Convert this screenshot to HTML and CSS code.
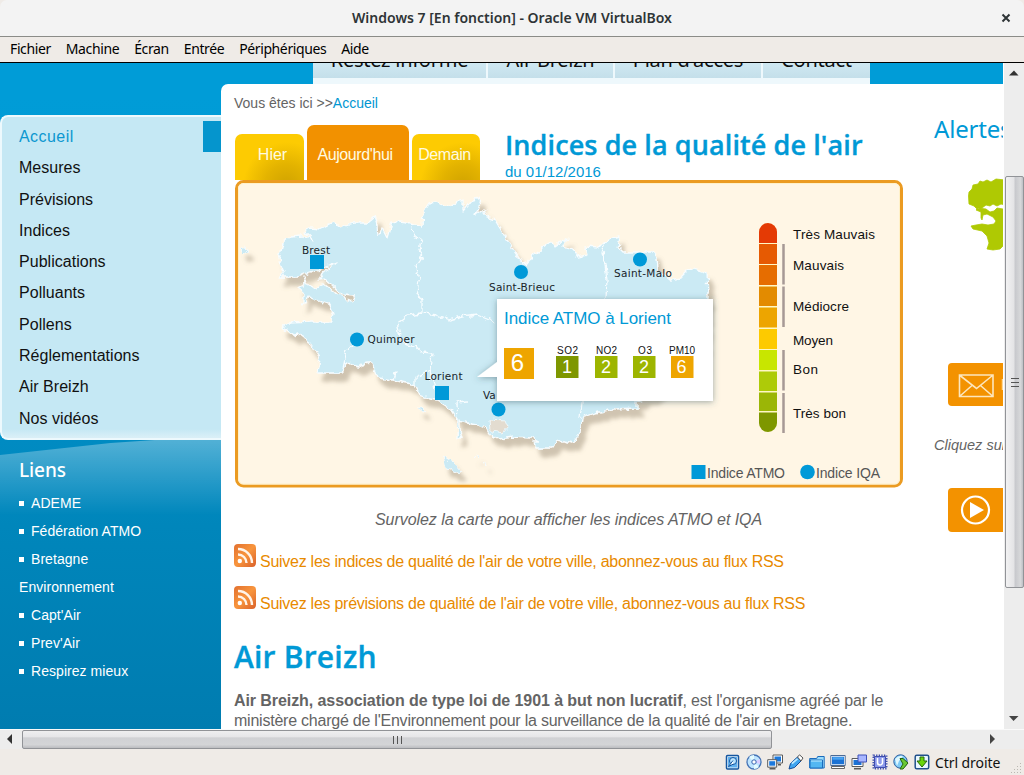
FILE: index.html
```html
<!DOCTYPE html>
<html lang="fr">
<head>
<meta charset="utf-8">
<title>Windows 7 [En fonction] - Oracle VM VirtualBox</title>
<link rel="stylesheet" href="styles.css">
</head>
<body>
<header class="titlebar">
  <span class="title-text">Windows 7 [En fonction] - Oracle VM VirtualBox</span>
  <svg class="close" width="10" height="10" viewBox="0 0 10 10"><path d="M1.500 1.500l7 7M8.500 1.500l-7 7" stroke="#2e3436" stroke-width="2"/></svg>
</header>
<nav class="menubar"><span>Fichier</span><span>Machine</span><span>Écran</span><span>Entrée</span><span>Périphériques</span><span>Aide</span></nav>

<div class="screen">
  <div class="page">
    <aside class="sidebar">
      <ul class="menu">
        <li class="current">Accueil</li><li>Mesures</li><li>Prévisions</li><li>Indices</li><li>Publications</li><li>Polluants</li><li>Pollens</li><li>Réglementations</li><li>Air Breizh</li><li>Nos vidéos</li>
      </ul>
      <section class="links">
        <h3>Liens</h3>
        <ul><li>ADEME</li><li>Fédération ATMO</li><li>Bretagne</li><li class="cont">Environnement</li><li>Capt'Air</li><li>Prev'Air</li><li>Respirez mieux</li></ul>
      </section>
    </aside>
    <div class="body">
      <div class="topnav"><div class="tabs"><span class="t1">Restez informé</span><span class="t2">Air Breizh</span><span class="t3">Plan d'accès</span><span class="t4">Contact</span></div></div>
      <div class="white">
        <main class="main">
          <p class="crumb">Vous êtes ici &gt;&gt;<a>Accueil</a></p>
          <div class="maphead">
            <div class="day hier"><span>Hier</span></div><div class="day today"><span>Aujourd'hui</span></div><div class="day demain"><span>Demain</span></div>
            <div class="heads"><h1>Indices de la qualité de l'air</h1><p>du 01/12/2016</p></div>
          </div>
          <div class="map">
            <svg width="668" height="308" viewBox="235 180 668 308">
              <defs>
                <filter id="coast" x="235" y="180" width="520" height="308" filterUnits="userSpaceOnUse">
                  <feTurbulence type="fractalNoise" baseFrequency="0.16" numOctaves="2" seed="4"/>
                  <feDisplacementMap in="SourceGraphic" scale="7" xChannelSelector="R" yChannelSelector="G" result="land"/>
                  <feDropShadow in="land" dx="5" dy="8" stdDeviation="2.2" flood-color="#8d8069" flood-opacity=".42"/>
                </filter>
                <filter id="lift" x="-20%" y="-20%" width="140%" height="150%"><feDropShadow dx="0" dy="1" stdDeviation="3" flood-color="#34545f" flood-opacity=".5"/></filter>
                <clipPath id="pill"><rect x="759" y="223" width="18" height="209" rx="9"/></clipPath>
              </defs>
              <rect x="236.500" y="181.500" width="665" height="304.500" rx="7" fill="#fff6e5" stroke="#eb9b22" stroke-width="3"/>
              <rect x="238.500" y="183.500" width="661" height="300.500" rx="5" fill="none" stroke="#fff1c9"/>
              <g filter="url(#coast)" stroke="#f8fdff" stroke-width="1.300" stroke-linejoin="round" fill="#cbeaf4">
                <path d="M279 260L283 243 290 237 302 236 313 240 304 232 310 228 320 229 333 222 340 227 353 223 367 223 375 216 378 225 379 237 382 228 387 238 392 221 407 223 422 227 423 213 430 203 436 202 447 207 463 200 463 211 472 200 480 198 475 216 484 209 487 217 495 220 507 240 519 258 522 263 528 262 533 255 550 242 553 247 567 238 563 247 573 250 578 257 587 255 585 247 598 248 605 241 620 237 618 247 623 252 652 252 657 258 658 270 670 280 680 278 690 268 707 273 708 297 706 330 704 370 672 385 655 395 637 401 637 408 613 409 595 413 582 418 580 433 573 443 558 440 553 448 535 448 533 442 540 442 532 438 513 437 500 439 492 437 487 429 478 425 467 423 460 420 460 430 462 438 457 438 458 420 452 410 437 400 430 399 420 395 415 385 393 380 378 378 372 365 366 360 363 367 347 363 342 373 318 373 320 358 310 343 298 334 293 335 287 330 282 327 288 323 313 322 330 322 333 313 330 305 308 297 303 305 303 292 298 288 305 283 303 277 309 286 317 288 325 285 338 295 352 301 355 296 343 295 331 284 325 279 318 280 323 272 337 263 320 269 307 273 297 277 280 277 283 270Z"/>
                <path fill="none" d="M412 227L414 236 421 240 419 250 422 258 416 267 419 280 417 293 422 300 422 313 407 315 397 323 402 343 416 346 421 352 432 353 430 370 415 377 415 385M422 313L437 315 450 320 462 317 477 315 487 319 495 323M605 241L602 253 605 265 607 280 606 298M582 390L582 402 580 418M393 380L395 372M430 370L434 390M342 373L347 350 354 344M468 401L457 402 458 420"/>
                <path stroke-width=".8" d="M240 250l5-3 4 4-5 3zM443 456l10 6 8 9-2 3-13-7zM417 408l6 0 3 3-4 1zM475 456l3 1v2zM484 463l3 2v2z"/>
                <path fill="#e3dcd0" stroke-width=".8" d="M490 419l15 1 3 7-5 6-12-2z"/>
              </g>
              <g fill="#0099d8"><path d="M310 255h14v14h-14zM435 386h14v14h-14zM691.500 465h14v14h-14z"/><circle cx="521" cy="272" r="7"/><circle cx="640" cy="259.500" r="7"/><circle cx="357" cy="339.500" r="7"/><circle cx="498.500" cy="409.500" r="7"/><circle cx="807.500" cy="472" r="7.300"/></g>
              <g class="city"><text x="302" y="254" textLength="28">Brest</text><text x="489" y="291" textLength="66">Saint-Brieuc</text><text x="614" y="277" textLength="58">Saint-Malo</text><text x="367.500" y="342.500" textLength="47">Quimper</text><text x="424.500" y="379.500" textLength="38">Lorient</text><text x="483" y="399">Va</text></g>
              <g filter="url(#lift)"><path d="M497 299h216v102H497V377H477L497 362z" fill="#fff"/></g>
              <text class="poptitle" x="504" y="324" textLength="167">Indice ATMO à Lorient</text>
              <path d="M504 348h30v31h-30zM671 356h22.500v22h-22.500z" fill="#eea500"/><path d="M556 356h22.500v22h-22.500z" fill="#7e9700"/><path d="M595 356h22.500v22h-22.500zM633 356h22.500v22h-22.500z" fill="#9db500"/>
              <g class="small"><text x="557" y="354" textLength="21">SO2</text><text x="596" y="354" textLength="21">NO2</text><text x="638" y="354" textLength="14">O3</text><text x="669" y="354" textLength="26">PM10</text></g>
              <g class="score"><text class="big" x="517.500" y="371">6</text><text x="567" y="373">1</text><text x="606" y="373">2</text><text x="644" y="373">2</text><text x="681.500" y="373">6</text></g>
              <g clip-path="url(#pill)"><path fill="#fff7c4" d="M759 223h18v210h-18z"/><path fill="#e43a05" d="M759 223h18v20h-18z"/><path fill="#e65a02" d="M759 244h18v20h-18z"/><path fill="#e66d00" d="M759 265h18v20h-18z"/><path fill="#e38b00" d="M759 286.500h18v19.500h-18z"/><path fill="#eda500" d="M759 307.500h18v20h-18z"/><path fill="#fdca00" d="M759 329h18v20h-18z"/><path fill="#c8e600" d="M759 350h18v20h-18z"/><path fill="#aecb08" d="M759 371.500h18v19.500h-18z"/><path fill="#9bb606" d="M759 392.500h18v18.500h-18z"/><path fill="#7e9700" d="M759 412.500h18v20h-18z"/></g>
              <path stroke="#a79995" stroke-width="2.500" d="M783.500 244v40.500M783.500 286.500v40.500M783.500 350v40.500M783.500 393v40"/>
              <g class="level"><text x="793" y="239" textLength="82">Très Mauvais</text><text x="793" y="270" textLength="51">Mauvais</text><text x="793" y="311" textLength="56">Médiocre</text><text x="793" y="345" textLength="40">Moyen</text><text x="793" y="374" textLength="25">Bon</text><text x="793" y="418" textLength="53">Très bon</text></g>
              <g class="legend"><text x="707" y="478" textLength="78">Indice ATMO</text><text x="816" y="478" textLength="64">Indice IQA</text></g>
            </svg>
          </div>
          <p class="hint">Survolez la carte pour afficher les indices ATMO et IQA</p>
          <p class="rss"><svg width="22" height="23" viewBox="0 0 22 23"><use href="#feed"/></svg><a>Suivez les indices de qualité de l'air de votre ville, abonnez-vous au flux RSS</a></p>
          <p class="rss"><svg width="22" height="23" viewBox="0 0 22 23"><use href="#feed"/></svg><a>Suivez les prévisions de qualité de l'air de votre ville, abonnez-vous au flux RSS</a></p>
          <h2>Air Breizh</h2>
          <p class="intro"><span class="l1"><b>Air Breizh, association de type loi de 1901 à but non lucratif</b>, est l'organisme agréé par le</span><br><span class="l2">ministère chargé de l'Environnement pour la surveillance de la qualité de l'air en Bretagne.</span></p>
        </main>
        <aside class="right">
          <h3>Alertes</h3>
          <svg class="tree" width="40" height="74" viewBox="963 178 40 74"><path fill="#afc903" stroke="#afc903" stroke-width=".8" stroke-linejoin="round" d="M969 204l-.5-8 .5-4 3-3 1-4 5-1 2-3 3 1 4-2 4 2 5-3 9 1v25l-4-1-4 2-4-2-3 2-4-1-4 3-5 1-3-3zM1003 209l-6-1-3 3-4 1-4-3-8-1-2 2 5 2 0 6 1 2 1-5 4-1 6 3 3 4-2 3-6 1-6-1-6 1-5 1 2 3 9 2 5 5 2 7-2 6 6 1 7-1 3-3z"/></svg>
          <div class="btn"><svg width="55" height="43" viewBox="948 363 55 43"><g fill="none" stroke="#fde6bd" stroke-width="1.600"><path d="M959.500 375h33.500v21.500h-33.500zM960 375.500l16.500 13 16-13M960 396l12-10.500M992.500 396l-12-10.500"/></g><path stroke="#ffd795" stroke-width="1.500" d="M1002.500 379v11"/></svg></div>
          <p class="click">Cliquez sur</p>
          <div class="btn"><svg width="55" height="44" viewBox="948 488 55 44"><circle cx="975.500" cy="510" r="13.500" fill="none" stroke="#fff" stroke-width="2.200"/><path fill="#fff" d="M970 502l14 8-14 8z"/></svg></div>
        </aside>
      </div>
    </div>
  </div>
  <div class="vbar"><svg width="18" height="20" viewBox="0 0 18 20"><path fill="#333" d="M4 12.500l5-5 4.500 5z"/></svg><div class="vthumb"><i></i><i></i><i></i></div><svg class="end" width="18" height="20" viewBox="0 0 18 20"><path fill="#444" d="M4 7h9.500l-5 5z"/></svg></div>
</div>
<div class="hbar"><svg width="22" height="20" viewBox="0 0 22 20"><path fill="#333" d="M12 4v10L7 9z"/></svg><div class="hthumb"><i></i><i></i><i></i></div><svg class="hend" width="20" height="20" viewBox="0 0 20 20"><path fill="#444" d="M6 4v10l5-5z"/></svg></div>
<footer class="status">
  <svg width="16" height="16" viewBox="0 0 16 16"><rect x="1.500" y="1.500" width="12" height="13.500" rx="1" fill="#e9f7ff" stroke="#15569f" stroke-width="1.500"/><rect x="3" y="3" width="9" height="10.500" fill="#62b1ef"/><circle cx="8" cy="7" r="3.500" fill="#b9e4ff" stroke="#15569f"/><path d="M8 6.500l-4.500 6 5-2.500" fill="#fff" stroke="#15569f"/></svg>
  <svg width="16" height="16" viewBox="0 0 16 16"><circle cx="8" cy="8" r="7" fill="#bfe5ff" stroke="#4674b6" stroke-width="1.300"/><path d="M8 8L3 3a7 7 0 0 1 5-2zM8 8l5 5a7 7 0 0 1-5 2z" fill="#e4fbff"/><path d="M8 8l6-3v5z" fill="#d9ccff"/><circle cx="8" cy="8" r="2.200" fill="#fff" stroke="#3463b1"/></svg>
  <svg width="16" height="16" viewBox="0 0 16 16"><path d="M6 1h9.500v8H6z" fill="#fff" stroke="#5a5a5a"/><path d="M7.500 2.500H14v5H7.500z" fill="#1b78dd"/><path d="M.7 5.700h9v7.500h-9z" fill="#fff" stroke="#5a5a5a"/><path d="M2.200 7.200h6v4.500h-6z" fill="#1b78dd"/><path d="M2.500 14.700h6M11 10.700h3" stroke="#5a5a5a" stroke-width="1.600"/></svg>
  <svg width="16" height="16" viewBox="0 0 16 16"><path d="M1 15l1.500-5.500 7-6.500 3.500 4-6.500 6.500z" fill="#40a5ef" stroke="#164c96"/><path d="M9.500 3l2-2.200L15 4l-2 3z" fill="#fff" stroke="#555"/><path d="M4 9.500l5.500-4.700" stroke="#c3ecff" stroke-width="1.700"/></svg>
  <svg width="16" height="16" viewBox="0 0 16 16"><path d="M.7 14V4.500h7l1-2h6.500V14z" fill="#9cdcfb" stroke="#1b6cbd"/><path d="M1 6h12.500v8H1z" fill="#53b7f2" stroke="#1b6cbd"/><path d="M2 7h11" stroke="#c3eeff"/></svg>
  <svg width="16" height="16" viewBox="0 0 16 16"><path d="M.8 1.500h14.400v10H.8z" fill="#fff" stroke="#4b6a94"/><path d="M2 2.700h12v7.600H2z" fill="#1b72d4"/><path d="M2.500 3.200h11v2.500h-11z" fill="#4aa3f0"/><path d="M1.500 12.500h13v2h-13z" fill="#fff" stroke="#666"/></svg>
  <svg width="16" height="16" viewBox="0 0 16 16"><path d="M1 4.500h11v8H1z" fill="#fff" stroke="#5a5a5a"/><path d="M2.500 6h8v5h-8z" fill="#1b72d4"/><path d="M3 14.700h7" stroke="#5a5a5a" stroke-width="1.600"/><path d="M7 1h8.500v7H7z" fill="#a9b7ff" stroke="#4052b9"/></svg>
  <svg width="16" height="16" viewBox="0 0 16 16"><rect x="1.500" y="1.500" width="13" height="13" fill="none" stroke="#3f4ead" stroke-width="2" stroke-dasharray="1.300 1.300"/><path d="M2.500 2.500h11v11h-11z" fill="#8c9aec" stroke="#3f4ead"/><path d="M5.500 4v4.500a2.500 2.500 0 0 0 5 0V4" fill="none" stroke="#fff" stroke-width="1.600"/></svg>
  <svg width="16" height="16" viewBox="0 0 16 16"><circle cx="7.500" cy="7.500" r="6.700" fill="#7fcaf5" stroke="#315f9e"/><path d="M2 5q4-4 8-3L6 7 4 12z" fill="#dff7ff"/><path d="M7 4.500h3l5 4.500-5 6H7l3-5z" fill="#6cc934" stroke="#24660e"/></svg>
  <svg width="16" height="16" viewBox="0 0 16 16"><rect x="1.200" y="1.200" width="13.500" height="13.500" rx="1.500" fill="#eaf8ff" stroke="#22518c" stroke-width="1.500"/><path d="M6 3h4v4h3l-5 6-5-6h3z" fill="#69d60b" stroke="#28680d"/></svg>
  <span>Ctrl droite</span>
  <svg class="grip" width="13" height="13" viewBox="0 0 13 13"><path fill="#bbb8b2" d="M10 1h1v1h-1zM7 4h1v1H7zM10 4h1v1h-1zM4 7h1v1H4zM7 7h1v1H7zM10 7h1v1h-1zM1 10h1v1H1zM4 10h1v1H4zM7 10h1v1H7zM10 10h1v1h-1z"/></svg>
</footer>
<svg class="defs" width="0" height="0"><defs>
  <linearGradient id="fg" x1="0" y1="0" x2="1" y2="1"><stop offset="0" stop-color="#e2702f"/><stop offset=".5" stop-color="#f8953d"/><stop offset="1" stop-color="#d9602a"/></linearGradient>
  <g id="feed"><rect width="22" height="23" rx="4" fill="url(#fg)"/><circle cx="5.800" cy="17" r="2.200" fill="#fff"/><path d="M4 10.500a8.500 8.500 0 0 1 8.500 8.500M4 5a14 14 0 0 1 14 14" fill="none" stroke="#fff4e8" stroke-width="2.400"/></g>
</defs></svg>
</body>
</html>
```

FILE: styles.css
```css
* { box-sizing: border-box; }
body { margin: 0; width: 1024px; height: 775px; overflow: hidden; display: flex; flex-direction: column; background: #efebe7; font-family: "Liberation Sans", Arial, sans-serif; }
h1, h2, h3, p, ul { margin: 0; padding: 0; }
ul { list-style: none; }
svg { display: block; flex: none; }
.defs { position: absolute; }

.titlebar { height: 37px; flex: none; background: #f3f3f3; border-bottom: 1px solid #8b8c88; border-radius: 7px 7px 0 0; display: grid; grid-template-columns: 1fr auto 1fr; align-items: center; font: 600 14px "Noto Sans", sans-serif; color: #2e3436; }
.title-text { grid-column: 2; white-space: nowrap; padding-bottom: 2px; }
.close { justify-self: end; margin-right: 13px; }
.menubar { height: 26px; flex: none; border-bottom: 1px solid #000; background: #efebe7; display: flex; align-items: center; gap: 15px; padding: 0 0 2px 10px; font: 14px/20px "Noto Sans", sans-serif; letter-spacing: -.39px; color: #000; }

.screen { height: 666px; flex: none; display: flex; background: #fff; }
.page { width: 1003px; height: 666px; overflow: hidden; display: flex; background: linear-gradient(#009cd7 0, #009cd7 35px, #0096d0 45%, #007cb0 100%); }
.sidebar { width: 221px; flex: none; padding-top: 52px; }
.menu { height: 325px; background: linear-gradient(#c5e8f4 0, #c5e8f4 312px, #d9eff7 320px); border: solid #edf9fd; border-width: 2px 0 2px 2px; border-radius: 8px 0 0 8px; padding: 4px 0 0 17px; font-size: 16px; letter-spacing: .03px; }
.menu li { height: 31.300px; line-height: 31.300px; color: #111; }
.menu .current { letter-spacing: .45px; color: #0b97d0; background: linear-gradient(#0595cd, #0595cd) right / 18px 32px no-repeat; }
.links { height: 289px; padding: 14px 0 0 19px; color: #fff; background: linear-gradient(#008bc2 0, #0086bb 30%, #007cb0 100%); position: relative; }
.links::before { content: ""; position: absolute; inset: 0; background: linear-gradient(rgba(255,255,255,.32), rgba(255,255,255,0) 75px); clip-path: polygon(0 15px, 50% 3px, 70% 0, 100% 0, 100% 100%, 0 100%); }
.links h3 { font: 500 19px/32px "Noto Sans", sans-serif; letter-spacing: -.1px; position: relative; }
.links ul { padding-top: 3px; font-size: 14px; letter-spacing: .05px; position: relative; }
.links li { height: 28px; line-height: 28px; display: flex; align-items: center; }
.links li::before { content: ""; width: 5px; height: 5px; background: #fff; margin-right: 7px; }
.links .cont::before { display: none; }

.body { width: 782px; flex: none; display: flex; flex-direction: column; }
.topnav { height: 21px; flex: none; padding-left: 92px; }
.tabs { width: 557px; height: 21px; background: #eef8fc; display: flex; gap: 2px; font: 20px/1px "Noto Sans", sans-serif; letter-spacing: -.25px; color: #111; }
.tabs span { height: 15px; overflow: hidden; background: linear-gradient(#cfe8f2, #c4dfea); text-align: center; white-space: nowrap; }
.tabs span::before { content: ""; display: block; margin-top: -4px; }
.t1 { width: 173px; } .t2 { width: 125px; } .t3 { width: 146px; } .t4 { width: 107px; }
.white { flex: 1; background: #fff; border-radius: 7px 0 0 0; display: flex; }
.main { width: 682px; flex: none; padding-left: 13px; }
.crumb { height: 41px; padding-top: 9px; line-height: 20px; font-size: 14px; color: #646464; }
.crumb a { color: #0096d2; }
.maphead { height: 55px; padding-left: 1px; display: flex; align-items: flex-end; }
.day { height: 46px; border-radius: 7px 7px 0 0; background: radial-gradient(ellipse at 75% 115%, #cfa200 0, #e3b300 30%, #fdcb02 60%); color: #fffbe0; font-size: 16px; line-height: 41px; text-align: center; }
.hier { width: 69px; margin-right: 3px; padding-left: 6px; } .demain { width: 68px; padding-right: 3px; letter-spacing: -.4px; line-height: 42px; }
.today { width: 102px; height: 55px; margin-right: 3px; padding-right: 6px; background: #f29100; line-height: 60px; letter-spacing: -.4px; }
.heads { padding-left: 25px; align-self: stretch; color: #0099d6; }
.heads h1 { font: 600 27px/40px "Open Sans", sans-serif; letter-spacing: .1px; -webkit-text-stroke: .35px #0099d6; white-space: nowrap; }
.heads p { font-size: 15px; line-height: 14px; }
.map { padding-left: 1px; height: 308px; }
.city { font: 10.500px "DejaVu Sans", sans-serif; fill: #182429; }
.poptitle { font-size: 17px; fill: #0099d6; }
.small { font-size: 10px; fill: #111; }
.score { font-size: 18px; fill: #fff; text-anchor: middle; }
.big { font-size: 24px; }
.level { font-size: 13.500px; fill: #111; }
.legend { font-size: 14px; fill: #555; }
.hint { padding: 22px 0 0 141px; height: 41px; font-size: 16px; line-height: 20px; font-style: italic; letter-spacing: -.06px; color: #646464; white-space: nowrap; }
.rss { height: 23px; margin-top: 15px; display: flex; gap: 4px; font-size: 16px; line-height: 35px; letter-spacing: -.265px; color: #e88a00; white-space: nowrap; }
.rss + .rss { margin-top: 19px; }
h2 { margin-top: 24px; font: 600 30px/48px "Open Sans", sans-serif; letter-spacing: .2px; -webkit-text-stroke: .35px #0099d6; color: #0099d6; }
.intro { margin-top: 10px; font-size: 16px; line-height: 20px; color: #646464; white-space: nowrap; }
.l1 { letter-spacing: -.17px; }
.l1 b { letter-spacing: -.08px; }
.l2 { letter-spacing: -.23px; }
.right { width: 100px; overflow: hidden; padding-left: 31px; }
.right h3 { height: 94px; padding-top: 29px; font: 400 24px/32px "Noto Sans", sans-serif; letter-spacing: -.2px; color: #0099d6; }
.tree { margin-left: 29px; }
.btn { margin: 111px 0 0 14px; width: 80px; border-radius: 4px; background: #f39200; }
.click { margin-top: 29px; font-size: 14.500px; line-height: 20px; font-style: italic; color: #646464; white-space: nowrap; }
.click + .btn { margin-top: 33px; }

.vbar { width: 21px; padding: 0 1px 0 1px; background: #ededed; border-left: 1px solid #fff; display: flex; flex-direction: column; }
.vthumb { margin: 93px 0 0; width: 19px; height: 412px; border: 1px solid #919397; border-radius: 2px; background: linear-gradient(90deg, #f2f2f3 0, #e4e4e6 45%, #c8c9cd 55%, #d7d8da 85%, #bfc0c5); display: flex; flex-direction: column; gap: 3px; align-items: center; justify-content: center; }
.vthumb i { width: 8px; height: 1px; background: #555; }
.end { margin-top: auto; }
.hbar { height: 20px; flex: none; background: #ededed; border-top: 1px solid #fafafa; display: flex; }
.hthumb { width: 750px; height: 19px; border: 1px solid #919397; border-radius: 2px; background: linear-gradient(#efeff0 0, #e6e6e8 35%, #d0d1d4 40%, #d4d5d7 80%, #bbbcc0); display: flex; gap: 3px; align-items: center; justify-content: center; }
.hthumb i { width: 1px; height: 8px; background: #555; }
.hend { margin: 0 20px 0 auto; }
.status { height: 26px; display: flex; align-items: center; gap: 5px; padding-left: 725px; font: 14px "Noto Sans", sans-serif; letter-spacing: -.08px; color: #111; white-space: nowrap; }
.grip { margin: auto 0 0 5px; }
```
